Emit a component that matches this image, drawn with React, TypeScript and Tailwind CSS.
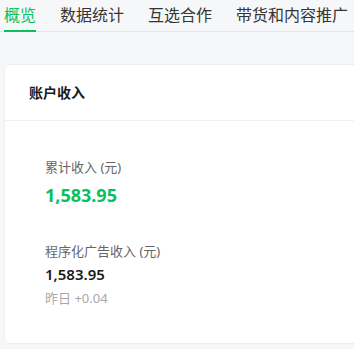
import React from "react";

const tabs = ["概览", "数据统计", "互选合作", "带货和内容推广"];

const App: React.FC = () => {
  return (
    <div
      className="w-[354px] h-[349px] overflow-hidden bg-[#f6f7f9]"
      style={{ fontFamily: '"Noto Sans", "Noto Sans CJK SC", sans-serif' }}
    >
      {/* tabs */}
      <div className="flex h-[32px] gap-6 pl-1 border-b border-[#e3e5e8] whitespace-nowrap">
        {tabs.map((tab, i) => (
          <div
            key={tab}
            className={
              i === 0
                ? "h-[32px] -mb-px border-b-2 border-[#07c160] text-[16px] leading-[30px] text-[#07c160]"
                : "h-[32px] text-[16px] leading-[30px] text-[#353535]"
            }
          >
            {tab}
          </div>
        ))}
      </div>

      {/* card */}
      <div className="ml-1 mt-8 w-[420px] h-[280px] bg-white rounded-md border border-[#eceef1]">
        <div className="h-[56px] flex items-center pl-[24px] border-b border-[#eef0f2]">
          <span className="text-[14px] font-semibold text-[#1a1a1a]">账户收入</span>
        </div>
        <div className="pl-[40px] pt-[36px]">
          <div className="text-[13px] leading-[20px] text-[#666]">累计收入 (元)</div>
          <div className="mt-[5px] text-[18px] leading-[26px] font-bold text-[#07c160]">1,583.95</div>

          <div className="mt-[33px] text-[13px] leading-[20px] text-[#666]">程序化广告收入 (元)</div>
          <div className="mt-[2px] text-[15px] leading-[22px] font-semibold text-[#1a1a1a]">1,583.95</div>
          <div className="mt-[3px] text-[13px] leading-[20px] text-[#a8a8a8]">昨日 +0.04</div>
        </div>
      </div>
    </div>
  );
};

export default App;
